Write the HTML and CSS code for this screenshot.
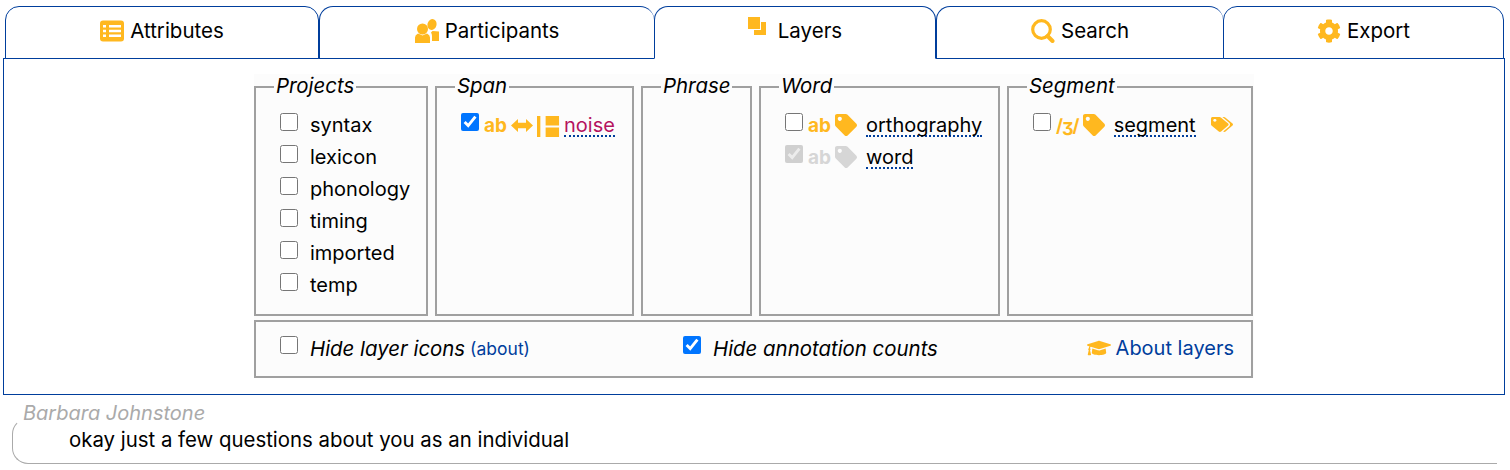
FILE: index.html
```html
<!DOCTYPE html>
<html lang="en">
<head>
<meta charset="utf-8">
<title>Layers</title>
<link rel="stylesheet" href="styles.css">
</head>
<body>
<nav class="tabs">
  <a class="tab thick"><svg class="ticon" viewBox="0 0 24 22"><rect width="24" height="21" y="0.5" rx="3" fill="#ffb81f"/><path d="M3 5h3v2.600H3zM9 5h12v2.600H9zM3 9.700h3v2.600H3zM9 9.700h12v2.600H9zM3 14.400h3V17H3zM9 14.400h12V17H9z" fill="#fff"/></svg>Attributes</a>
  <a class="tab"><svg class="ticon" viewBox="0 0 24 24"><g fill="#ffb81f"><ellipse cx="17" cy="5.500" rx="4.500" ry="5.500" transform="rotate(15 17 5.500)"/><circle cx="7.500" cy="10" r="5.500"/><path d="M0 24v-5.500q0-2.500 3-4l4.500 2 4.500-2q3 1.500 3 4V24z"/><path d="M17 22v-5q0-2-1-3.500l1.500-1.500 6.500.5V22z"/></g></svg>Participants</a>
  <a class="tab active thick"><svg class="ticon layers" viewBox="0 0 18 18"><path fill="#ffb81f" d="M0 0h12v12H0z"/><path fill="#ffb81f" d="M13 5h5v13H6v-5h7z"/></svg>Layers</a>
  <a class="tab"><svg class="ticon" viewBox="0 0 24 24"><circle cx="10.500" cy="10.500" r="8.800" fill="none" stroke="#ffb81f" stroke-width="3.200"/><path d="M16.500 17l5 5" stroke="#ffb81f" stroke-width="4" stroke-linecap="round"/></svg>Search</a>
  <a class="tab"><svg class="ticon" viewBox="0 0 512 512"><path fill="#ffb81f" d="M487.400 315.700l-42.600-24.600c4.300-23.200 4.300-47 0-70.200l42.600-24.600c4.900-2.800 7.100-8.600 5.500-14-11.100-35.600-30-67.800-54.700-94.600-3.800-4.100-10-5.100-14.800-2.300L380.800 110c-17.900-15.400-38.500-27.300-60.800-35.100V25.800c0-5.600-3.900-10.500-9.400-11.700-36.700-8.200-74.300-7.800-109.200 0-5.500 1.200-9.400 6.100-9.400 11.700V75c-22.200 7.900-42.800 19.800-60.800 35.100L88.700 85.500c-4.900-2.800-11-1.900-14.800 2.300-24.700 26.700-43.600 58.900-54.700 94.600-1.700 5.400.6 11.200 5.500 14L67.300 221c-4.300 23.200-4.300 47 0 70.200l-42.600 24.600c-4.900 2.800-7.100 8.600-5.500 14 11.100 35.600 30 67.800 54.700 94.600 3.800 4.100 10 5.100 14.800 2.300l42.600-24.600c17.900 15.400 38.500 27.300 60.800 35.100v49.200c0 5.600 3.900 10.500 9.400 11.700 36.700 8.200 74.300 7.800 109.200 0 5.500-1.200 9.400-6.100 9.400-11.700v-49.200c22.200-7.900 42.800-19.800 60.800-35.100l42.600 24.600c4.900 2.800 11 1.900 14.800-2.300 24.700-26.700 43.600-58.900 54.700-94.600 1.500-5.500-.7-11.300-5.600-14.100zM256 336c-44.100 0-80-35.900-80-80s35.900-80 80-80 80 35.900 80 80-35.900 80-80 80z"/></svg>Export</a>
</nav>
<main class="panel">
  <form class="picker">
    <div class="groups">
      <fieldset class="group g-projects">
        <legend>Projects</legend>
        <label class="row"><input type="checkbox"><span class="plain">syntax</span></label>
        <label class="row"><input type="checkbox"><span class="plain">lexicon</span></label>
        <label class="row"><input type="checkbox"><span class="plain">phonology</span></label>
        <label class="row"><input type="checkbox"><span class="plain">timing</span></label>
        <label class="row"><input type="checkbox"><span class="plain">imported</span></label>
        <label class="row"><input type="checkbox"><span class="plain">temp</span></label>
      </fieldset>
      <fieldset class="group g-span">
        <legend>Span</legend>
        <label class="row layer"><input type="checkbox" checked>
          <span class="ab">ab</span>
          <svg class="i-arrows" viewBox="0 0 22 14" preserveAspectRatio="none"><path fill="#ffb81f" d="M0 7l7-7v4h8V0l7 7-7 7v-4H7v4z"/></svg>
          <svg class="i-bar" viewBox="0 0 24 24"><path fill="#ffb81f" d="M0 1h3.500v22H0zM9 1h14v10H9zM9 13h14v10H9z"/></svg>
          <span class="name pink">noise</span></label>
      </fieldset>
      <fieldset class="group g-phrase">
        <legend>Phrase</legend>
      </fieldset>
      <fieldset class="group g-word">
        <legend>Word</legend>
        <label class="row layer"><input type="checkbox">
          <span class="ab">ab</span>
          <svg class="i-tag" viewBox="0 0 512 512"><path fill="#ffb81f" d="M0 252.118V48C0 21.490 21.490 0 48 0h204.118a48 48 0 0 1 33.941 14.059l211.882 211.882c18.745 18.745 18.745 49.137 0 67.882L293.823 497.941c-18.745 18.745-49.137 18.745-67.882 0L14.059 286.059A48 48 0 0 1 0 252.118zM112 64c-26.510 0-48 21.490-48 48s21.490 48 48 48 48-21.490 48-48-21.490-48-48-48z"/></svg>
          <span class="name">orthography</span></label>
        <label class="row layer off"><input type="checkbox" checked disabled>
          <span class="ab">ab</span>
          <svg class="i-tag" viewBox="0 0 512 512"><path fill="#d6d6d6" d="M0 252.118V48C0 21.490 21.490 0 48 0h204.118a48 48 0 0 1 33.941 14.059l211.882 211.882c18.745 18.745 18.745 49.137 0 67.882L293.823 497.941c-18.745 18.745-49.137 18.745-67.882 0L14.059 286.059A48 48 0 0 1 0 252.118zM112 64c-26.510 0-48 21.490-48 48s21.490 48 48 48 48-21.490 48-48-21.490-48-48-48z"/></svg>
          <span class="name">word</span></label>
      </fieldset>
      <fieldset class="group g-segment">
        <legend>Segment</legend>
        <label class="row layer"><input type="checkbox">
          <span class="ab ipa">/ʒ/</span>
          <svg class="i-tag" viewBox="0 0 512 512"><path fill="#ffb81f" d="M0 252.118V48C0 21.490 21.490 0 48 0h204.118a48 48 0 0 1 33.941 14.059l211.882 211.882c18.745 18.745 18.745 49.137 0 67.882L293.823 497.941c-18.745 18.745-49.137 18.745-67.882 0L14.059 286.059A48 48 0 0 1 0 252.118zM112 64c-26.510 0-48 21.490-48 48s21.490 48 48 48 48-21.490 48-48-21.490-48-48-48z"/></svg>
          <span class="name">segment</span>
          <svg class="i-tags" viewBox="0 0 640 512" preserveAspectRatio="none"><path fill="#ffb81f" d="M497.941 225.941L286.059 14.059A48 48 0 0 0 252.118 0H48C21.490 0 0 21.490 0 48v204.118a48 48 0 0 0 14.059 33.941l211.882 211.882c18.744 18.745 49.136 18.746 67.882 0l204.118-204.118c18.745-18.745 18.745-49.137 0-67.882zM112 160c-26.510 0-48-21.490-48-48s21.490-48 48-48 48 21.490 48 48-21.490 48-48 48zm513.941 133.823L421.823 497.941c-18.745 18.745-49.137 18.745-67.882 0l-.36-.36L527.640 323.522c16.999-16.999 26.360-39.600 26.360-63.640s-9.362-46.641-26.360-63.640L331.397 0h48.721a48 48 0 0 1 33.941 14.059l211.882 211.882c18.745 18.745 18.745 49.137 0 67.882z"/></svg></label>
      </fieldset>
    </div>
    <fieldset class="group options">
      <label class="opt opt-icons"><input type="checkbox"><em>Hide layer icons</em> <a class="about-small">(about)</a></label>
      <label class="opt opt-counts"><input type="checkbox" checked><em>Hide annotation counts</em></label>
      <a class="about-layers"><svg class="i-cap" viewBox="0 0 640 512"><path fill="#ffb81f" d="M622.340 153.200L343.400 67.500c-15.200-4.670-31.600-4.670-46.790 0L17.660 153.200c-23.540 7.230-23.540 38.360 0 45.590l48.630 14.940c-10.670 13.190-17.230 29.280-17.880 46.900C38.780 266.150 32 276.110 32 288c0 10.780 5.680 19.850 13.860 25.650L20.330 428.530C18.110 438.520 25.710 448 35.940 448h56.110c10.240 0 17.840-9.480 15.620-19.470L82.140 313.650C90.320 307.850 96 298.780 96 288c0-11.570-6.470-21.250-15.660-26.870.76-15.020 8.440-28.300 20.690-36.720L296.600 284.500c9.060 2.780 26.440 6.250 46.790 0l278.950-85.700c23.550-7.240 23.550-38.360 0-45.600zM352.790 315.090c-28.530 8.760-52.840 3.920-65.590 0l-145.020-44.550L128 384c0 35.350 85.960 64 192 64s192-28.650 192-64l-14.180-113.470-145.030 44.560z"/></svg>About layers</a>
    </fieldset>
  </form>
</main>
<section class="transcript">
  <div class="speaker">Barbara Johnstone</div>
  <div class="turn">okay just a few questions about you as an individual</div>
</section>
</body>
</html>
```
FILE: styles.css
```css
* { box-sizing: border-box; }
html, body { margin: 0; padding: 0; background: #fff; }
body {
  font-family: Inter, "Noto Sans", sans-serif;
  font-size: 20px;
  color: #000;
  height: 470px;
  overflow: hidden;
  padding: 6px 5px 0 3px;
}
.tabs {
  display: grid;
  grid-template-columns: 314px 335px 282px 287px 281px;
  height: 53px;
  margin-left: 2px;
  position: relative;
  z-index: 1;
  font-size: 20.5px;
}
.tab {
  display: flex;
  align-items: center;
  justify-content: center;
  gap: 6px;
  border: 1px solid #003e9c;
  border-right-width: 0;
  border-radius: 14px 14px 0 0;
  background: #fff;
  padding-bottom: 4px;
}
.tab.thick { border-right-width: 1px; }
.tab:last-child { border-right-width: 1px; }
.tab.active { border-bottom-color: #fff; }
.ticon { width: 24px; height: 24px; }
.ticon.layers { width: 18px; height: 18px; margin: 0 6px 9px 0; }
.panel {
  border: 1px solid #003e9c;
  height: 337px;
  margin-top: -1px;
  padding: 15px 0 0 250px;
}
.picker { width: 1000px; background: #fcfcfc; padding: 0 1px 0 0; }
.groups { display: flex; gap: 7px; height: 242px; }
.group {
  margin: 0;
  border: 2px solid #a0a0a0;
  padding: 0;
  min-width: 0;
}
legend { font-style: italic; font-size: 20.4px; padding: 0 2px 2px; margin-left: -6px; line-height: 24px; }
.g-projects { width: 174px; padding: 9px 0 0 24px; }
.g-span { width: 199px; padding: 9px 0 0 24px; }
.g-phrase { width: 111px; }
.g-phrase legend { margin-left: 18px; }
.g-word { width: 241px; padding: 9px 0 0 24px; }
.g-segment { width: 246px; padding: 9px 0 0 24px; }
.row { display: flex; align-items: flex-start; height: 32px; line-height: 32px; white-space: nowrap; }
input[type=checkbox] { width: 18px; height: 18px; margin: 4px 0 0; flex: none; }
.plain { margin-left: 12px; }
.ab { color: #ffb81f; font-weight: 700; font-size: 19px; margin-left: 5px; line-height: 34px; }
.off .ab { color: #d6d6d6; }
.ipa { font-size: 18px; letter-spacing: -1px; }
.i-arrows { width: 22px; height: 13px; margin: 10px 0 0 4px; }
.i-bar { width: 23px; height: 23px; margin: 6px 4px 0 4px; }
.i-tag { width: 22px; height: 22px; margin: 5px 9px 0 4px; }
.i-tags { width: 22px; height: 15px; margin: 8px 0 0 15px; }
.name { border-bottom: 2px dotted #003e9c; height: 28px; line-height: 32px; }
.pink { color: #b5135f; }
.options { display: flex; align-items: center; height: 58px; margin-top: 4px; padding: 0 17px 2px 24px; }
.opt { display: flex; align-items: center; white-space: nowrap; font-size: 20.4px; }
.opt em { margin-left: 12px; }
.opt input { margin: 0; position: relative; top: -3px; }
.opt-icons { width: 403px; }
.opt-counts { width: 377px; }
.about-small { color: #003e9c; font-size: 17.500px; margin-left: 5px; }
.about-layers { color: #003e9c; display: flex; align-items: center; gap: 5px; white-space: nowrap; margin-left: auto; }
.i-cap { width: 24px; height: 20px; }
.transcript { margin: 7px 8px 0 9px; }
.speaker { color: #aaa; font-style: italic; font-size: 20px; line-height: 22px; margin-left: 11px; height: 22px; position: relative; }
.turn {
  border: 1px solid #aaa;
  border-top-color: transparent;
  border-right: 0;
  border-radius: 16px 0 0 16px;
  height: 46px;
  margin-top: -6px;
  padding: 10px 0 0 56px;
  font-size: 20.4px;
  line-height: 22px;
}
```
